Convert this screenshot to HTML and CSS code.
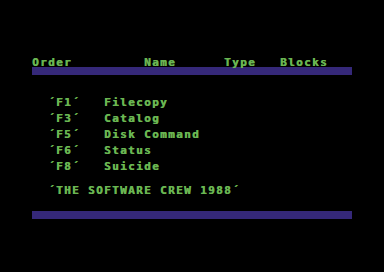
FILE: index.html
```html
<!DOCTYPE html>
<html lang="en">
<head>
  <meta charset="UTF-8" />
  <title>File Menu</title>
  <link rel="stylesheet" href="styles.css">
</head>
<body>
  <div class="screen">
    <div class="row header">Order         Name      Type   Blocks</div>
    <div class="bar"></div>

    <div class="menu">
      <div class="row">  ´F1´   Filecopy</div>
      <div class="row">  ´F3´   Catalog</div>
      <div class="row">  ´F5´   Disk Command</div>
      <div class="row">  ´F6´   Status</div>
      <div class="row">  ´F8´   Suicide</div>
    </div>

    <div class="row credit">  ´THE SOFTWARE CREW 1988´</div>
    <div class="bar bottom"></div>
  </div>
</body>
</html>
```

FILE: styles.css
```css
body {
  margin: 0;
  background: #000;
  font-family: 'DejaVu Sans Mono', 'Liberation Mono', monospace;
  font-weight: bold;
  color: #6ab652;
}

.screen {
  width: 320px;
  height: 200px;
  padding: 35px 0 0 32px;
}

.row {
  height: 8px;
  line-height: 8px;
  font-size: 11px;
  letter-spacing: 1.38px;
  white-space: pre;
  text-shadow: 0.5px 0 currentColor;
}

.header {
  margin-top: 24px;
}

.bar {
  height: 8px;
  background: #352879;
}

.menu {
  display: flex;
  flex-direction: column;
  gap: 8px;
  margin-top: 24px;
}

.credit {
  margin-top: 16px;
}

.bottom {
  margin-top: 16px;
}
```
